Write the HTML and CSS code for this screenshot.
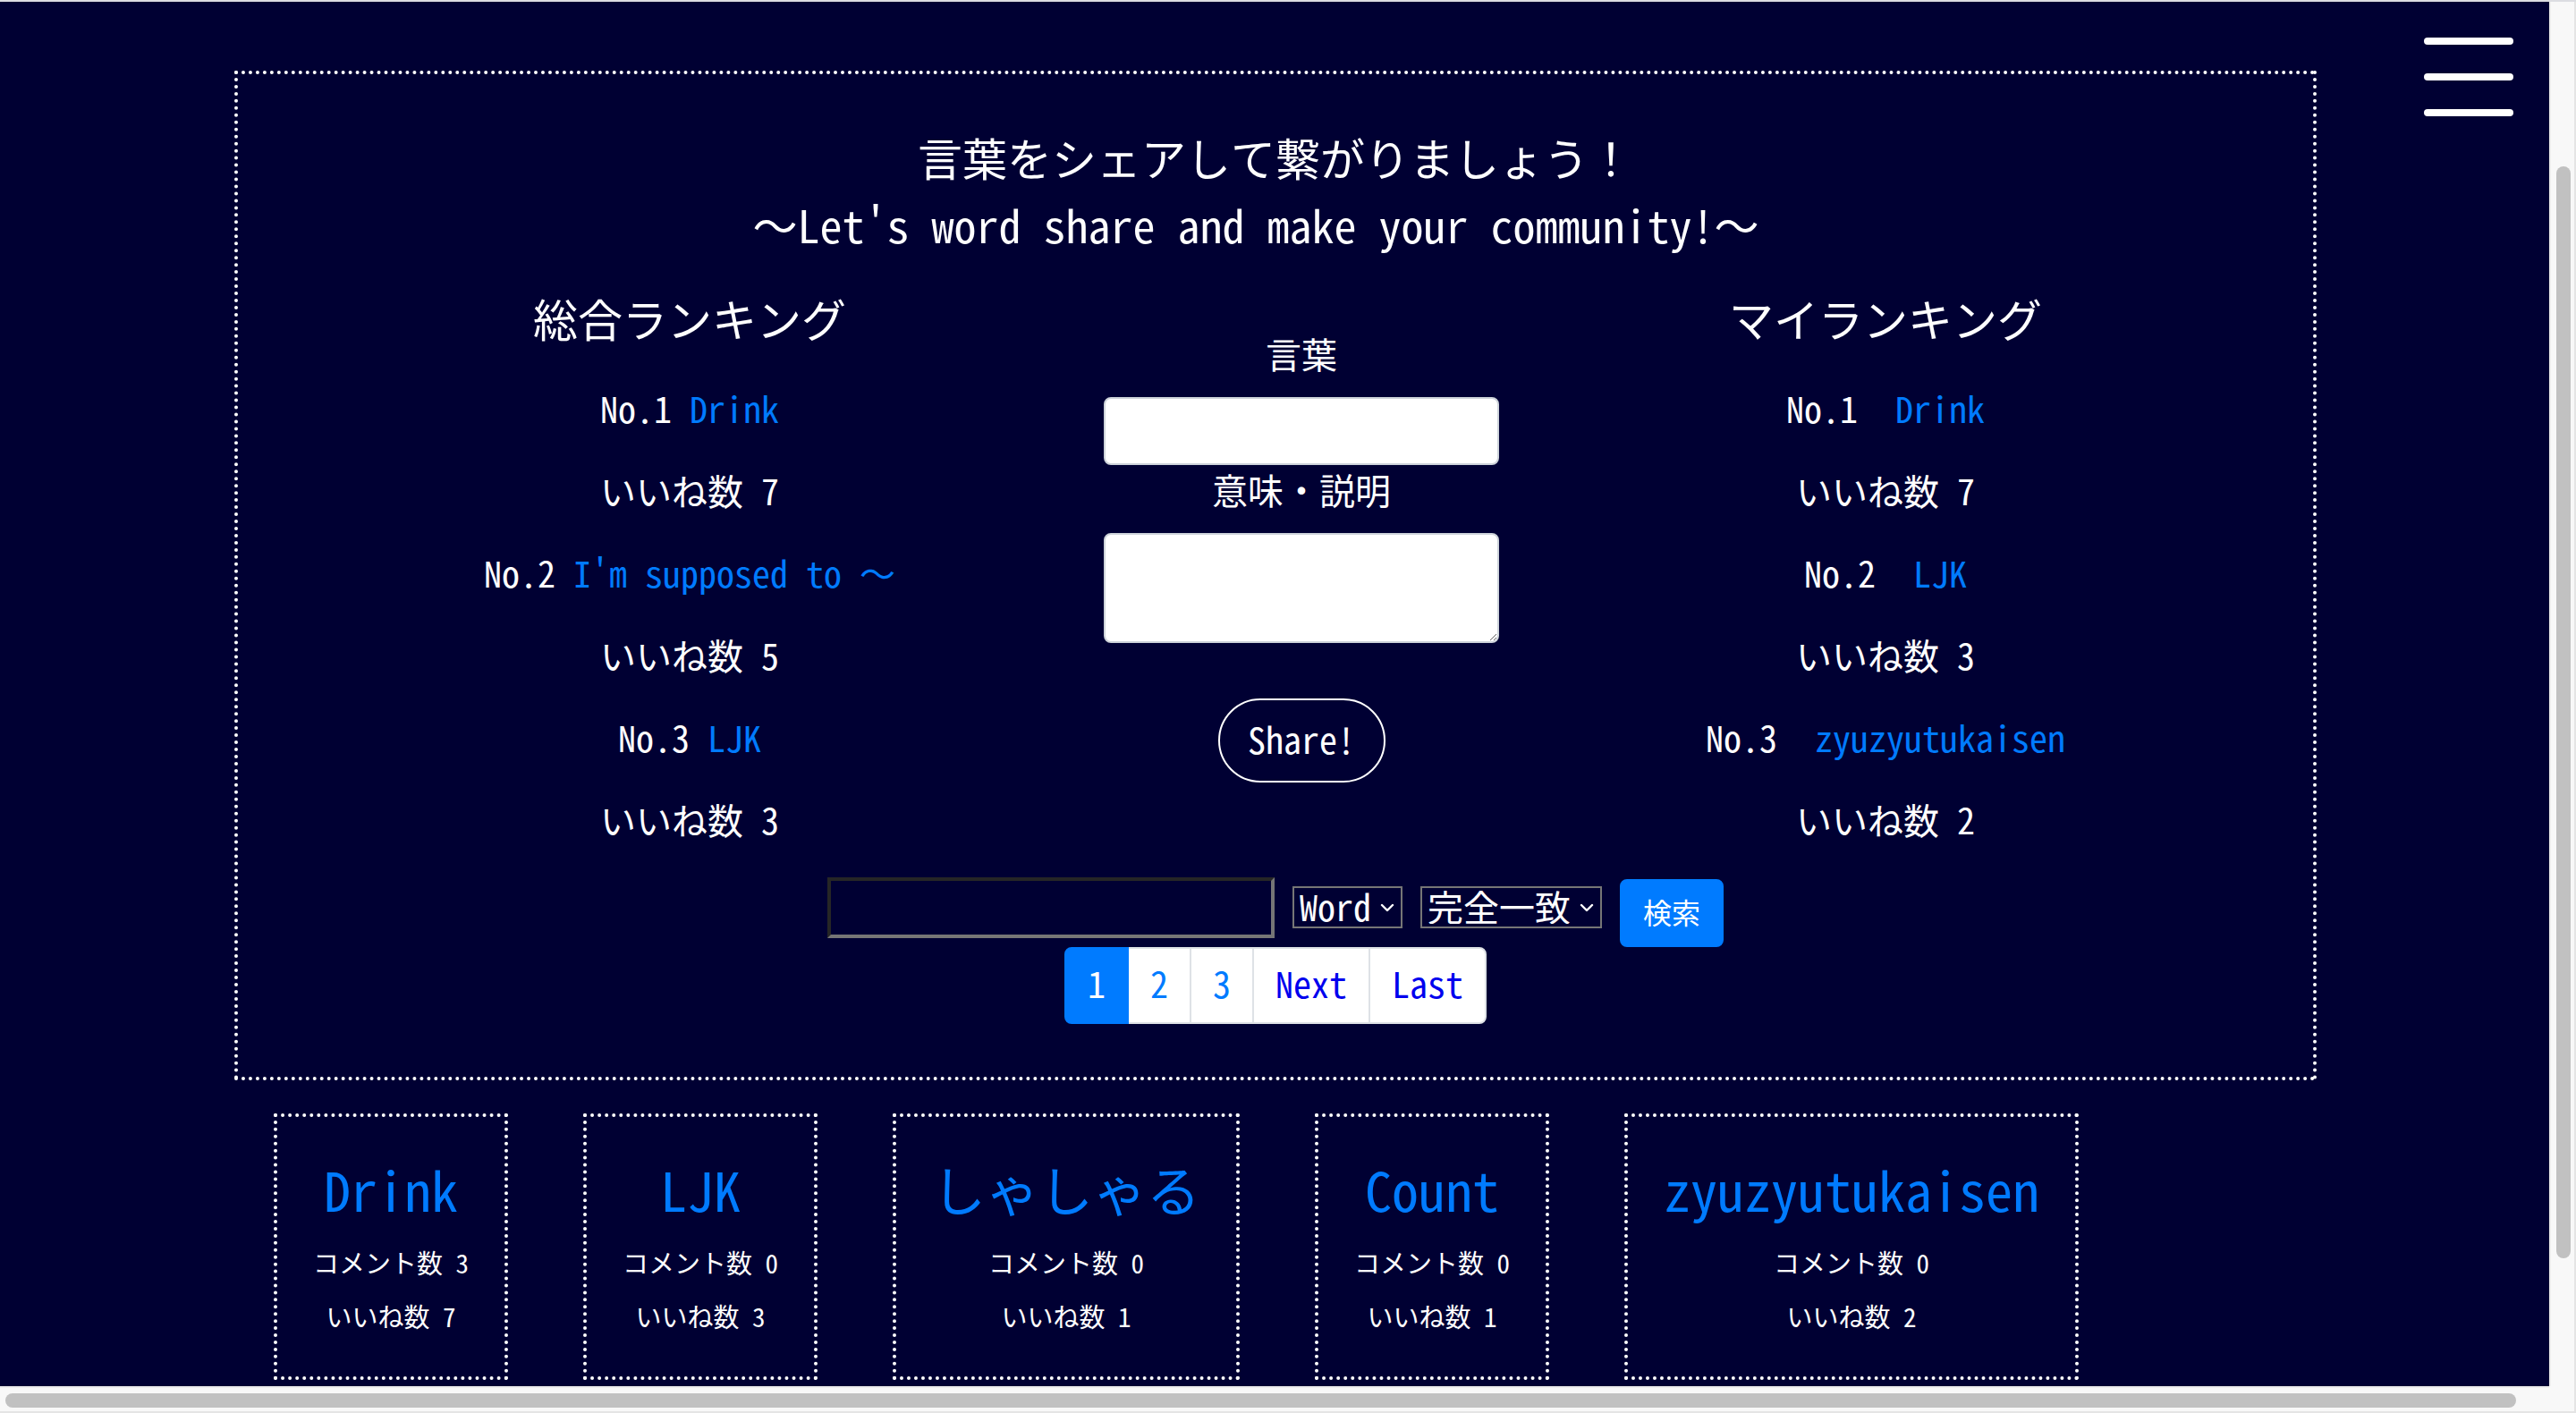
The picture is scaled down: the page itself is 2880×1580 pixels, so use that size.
FILE: index.html
```html
<!DOCTYPE html>
<html lang="ja">
<head>
<meta charset="utf-8">
<title>言葉をシェア</title>
<link rel="stylesheet" href="styles.css">
</head>
<body>
<div class="page">
  <section class="hero">
    <h1 class="hero-title">言葉をシェアして繋がりましょう！<br><span class="hero-sub">～Let's word share and make your community!～</span></h1>
    <div class="columns">
      <div class="col col-left">
        <h2 class="col-heading">総合ランキング</h2>
        <p class="rank">No.1 <a href="#">Drink</a></p>
        <p class="rank">いいね数 7</p>
        <p class="rank">No.2 <a href="#">I'm supposed to ～</a></p>
        <p class="rank">いいね数 5</p>
        <p class="rank">No.3 <a href="#">LJK</a></p>
        <p class="rank">いいね数 3</p>
      </div>
      <form class="col col-mid">
        <label class="field-label">言葉</label>
        <input class="form-control" type="text">
        <label class="field-label">意味・説明</label>
        <textarea class="form-control form-area"></textarea>
        <button class="share-btn" type="button">Share!</button>
      </form>
      <div class="col col-right">
        <h2 class="col-heading">マイランキング</h2>
        <p class="rank">No.1 <a class="gap" href="#">Drink</a></p>
        <p class="rank">いいね数 7</p>
        <p class="rank">No.2 <a class="gap" href="#">LJK</a></p>
        <p class="rank">いいね数 3</p>
        <p class="rank">No.3 <a class="gap" href="#">zyuzyutukaisen</a></p>
        <p class="rank">いいね数 2</p>
      </div>
    </div>
    <form class="search">
      <input class="search-input" type="text">
      <div class="select-wrap sel-word">
        <select class="select"><option>Word</option></select>
        <svg class="chev" viewBox="0 0 16 10" width="16" height="10"><polyline points="2,2 8,8 14,2" fill="none" stroke="#fff" stroke-width="2.4" stroke-linecap="round" stroke-linejoin="round"/></svg>
      </div>
      <div class="select-wrap sel-match">
        <select class="select"><option>完全一致</option></select>
        <svg class="chev" viewBox="0 0 16 10" width="16" height="10"><polyline points="2,2 8,8 14,2" fill="none" stroke="#fff" stroke-width="2.4" stroke-linecap="round" stroke-linejoin="round"/></svg>
      </div>
      <button class="btn-search" type="button">検索</button>
    </form>
    <nav class="pager">
      <a class="page-link active" href="#">1</a>
      <a class="page-link num" href="#">2</a>
      <a class="page-link num" href="#">3</a>
      <a class="page-link word" href="#">Next</a>
      <a class="page-link word last" href="#">Last</a>
    </nav>
  </section>
  <div class="cards">
    <div class="card"><a class="card-title" href="#">Drink</a><p class="card-line first">コメント数 3</p><p class="card-line">いいね数 7</p></div>
    <div class="card"><a class="card-title" href="#">LJK</a><p class="card-line first">コメント数 0</p><p class="card-line">いいね数 3</p></div>
    <div class="card"><a class="card-title" href="#">しゃしゃる</a><p class="card-line first">コメント数 0</p><p class="card-line">いいね数 1</p></div>
    <div class="card"><a class="card-title" href="#">Count</a><p class="card-line first">コメント数 0</p><p class="card-line">いいね数 1</p></div>
    <div class="card"><a class="card-title" href="#">zyuzyutukaisen</a><p class="card-line first">コメント数 0</p><p class="card-line">いいね数 2</p></div>
  </div>
</div>

<button class="hamburger" type="button" aria-label="menu"><span></span><span></span><span></span></button>

<div class="topline"></div>
<div class="vscroll"><div class="vthumb"></div></div>
<div class="hscroll"><div class="hthumb"></div></div>
<div class="scorner"></div>
</body>
</html>
```
FILE: styles.css
```css
* { box-sizing: border-box; }
html, body {
  margin: 0;
  height: 1580px;
  overflow: hidden;
  background: #000033;
}
body {
  color: #fff;
  font-family: "Noto Sans Mono CJK JP", "Noto Sans CJK JP", "DejaVu Sans Mono", monospace;
}
a { color: #007bff; text-decoration: none; }

.page {
  padding: 79px 0 0 262px;
}

.hero {
  width: 2328px;
  border: 4px dotted #fff;
  padding: 55px 0 59px;
}
.hero-title {
  margin: 0;
  font-size: 50px;
  line-height: 75px;
  font-weight: 400;
  text-align: center;
}
.hero-sub { padding-right: 44px; }

.columns {
  display: flex;
  align-items: flex-start;
  margin-top: 40px;
}
.col {
  display: flex;
  flex-direction: column;
  align-items: center;
  text-align: center;
}
.col-left { width: 600px; margin-left: 205px; }
.col-mid { width: 442px; margin-left: 163px; padding-top: 40px; }
.col-right { width: 600px; margin-left: 132px; }

.col-heading {
  margin: 0 0 41px;
  font-size: 50px;
  line-height: 54px;
  padding-bottom: 6px;
  font-weight: 400;
}
.rank {
  margin: 0 0 32px;
  font-size: 40px;
  line-height: 54px;
  padding-bottom: 6px;
  white-space: nowrap;
}
.rank .gap { margin-left: 22px; }

.field-label {
  display: block;
  font-size: 40px;
  line-height: 55px;
  padding-bottom: 5px;
  margin-bottom: 16px;
}
.form-control {
  display: block;
  width: 442px;
  height: 76px;
  border: 2px solid #ced4da;
  border-radius: 8px;
  background: #fff;
  font: inherit;
  font-size: 32px;
  padding: 12px 24px;
}
.form-area {
  height: 123px;
  resize: vertical;
}
.share-btn {
  margin-top: 62px;
  width: 187px;
  height: 94px;
  border: 2px solid #fff;
  border-radius: 47px;
  background: transparent;
  color: #fff;
  font: inherit;
  font-size: 40px;
  line-height: 50px;
  padding: 0 0 4px;
}

.search {
  display: flex;
  justify-content: center;
  align-items: flex-start;
  gap: 20px;
  margin: 0;
}
.search-input {
  width: 500px;
  height: 68px;
  background: transparent;
  border-style: solid;
  border-width: 4px;
  border-color: #262626 #767676 #767676 #262626;
  color: #fff;
  font: inherit;
  font-size: 32px;
  padding: 0 8px;
}
.select-wrap {
  position: relative;
  margin-top: 10px;
}
.select {
  -webkit-appearance: none;
  appearance: none;
  display: block;
  height: 47px;
  border: 2px solid #767676;
  border-radius: 0;
  background: transparent;
  color: #fff;
  font: inherit;
  font-size: 40px;
  line-height: 40px;
  padding: 0 33px 3px 6px;
}
.sel-word .select { width: 123px; }
.sel-match .select { width: 203px; }
.chev {
  position: absolute;
  right: 9px;
  top: 19px;
  width: 16px;
  height: 10px;
}
.btn-search {
  margin-top: 2px;
  height: 76px;
  padding: 10px 24px 14px;
  border: 2px solid #007bff;
  border-radius: 8px;
  background: #007bff;
  color: #fff;
  font: inherit;
  font-size: 32px;
  line-height: 48px;
}

.pager {
  display: flex;
  justify-content: center;
}
.page-link {
  display: block;
  height: 86px;
  padding: 13px 24px 19px;
  font-size: 40px;
  line-height: 50px;
  background: #fff;
  border: 2px solid #dee2e6;
  margin-left: -2px;
}
.page-link.active {
  margin-left: 0;
  background: #007bff;
  border-color: #007bff;
  color: #fff;
  border-radius: 8px 0 0 8px;
  position: relative;
}
.page-link.num { color: #007bff; }
.page-link.word { color: #0000ee; }
.page-link.last { border-radius: 0 8px 8px 0; }

.cards {
  display: flex;
  align-items: flex-start;
  gap: 84px;
  margin-top: 37px;
  padding-left: 44px;
}
.card {
  border: 4px dotted #fff;
  padding: 39px 40px 43px;
  text-align: center;
  white-space: nowrap;
}
.card-title {
  display: block;
  font-size: 60px;
  line-height: 82px;
  padding-bottom: 8px;
  margin-bottom: 14px;
}
.card-line {
  margin: 0;
  font-size: 29px;
  line-height: 38px;
  padding-bottom: 6px;
}
.card-line.first { margin-bottom: 16px; }

.hamburger {
  position: fixed;
  left: 2710px;
  top: 42px;
  width: 100px;
  height: 88px;
  padding: 0;
  border: 0;
  background: transparent;
  display: flex;
  flex-direction: column;
  justify-content: space-between;
}
.hamburger span {
  display: block;
  width: 100px;
  height: 8px;
  border-radius: 4px;
  background: #fff;
}

.topline {
  position: fixed;
  left: 0; top: 0;
  width: 2880px; height: 2px;
  background: #dcdde2;
}
.vscroll {
  position: fixed;
  left: 2850px; top: 2px;
  width: 30px; height: 1548px;
  background: #f8f8f8;
  border-left: 2px solid #ececec;
  border-right: 2px solid #e4e4e4;
}
.vthumb {
  position: absolute;
  left: 6px; top: 184px;
  width: 16px; height: 1221px;
  border-radius: 8px;
  background: #c1c1c1;
}
.hscroll {
  position: fixed;
  left: 0; top: 1550px;
  width: 2850px; height: 30px;
  background: #f8f8f8;
  border-top: 2px solid #ececec;
  border-bottom: 2px solid #e4e4e4;
}
.hthumb {
  position: absolute;
  left: 6px; top: 6px;
  width: 2807px; height: 16px;
  border-radius: 8px;
  background: #c1c1c1;
}
.scorner {
  position: fixed;
  left: 2850px; top: 1550px;
  width: 30px; height: 30px;
  background: #f8f8f8;
  border-bottom: 2px solid #e4e4e4;
  border-right: 2px solid #e4e4e4;
}
```
